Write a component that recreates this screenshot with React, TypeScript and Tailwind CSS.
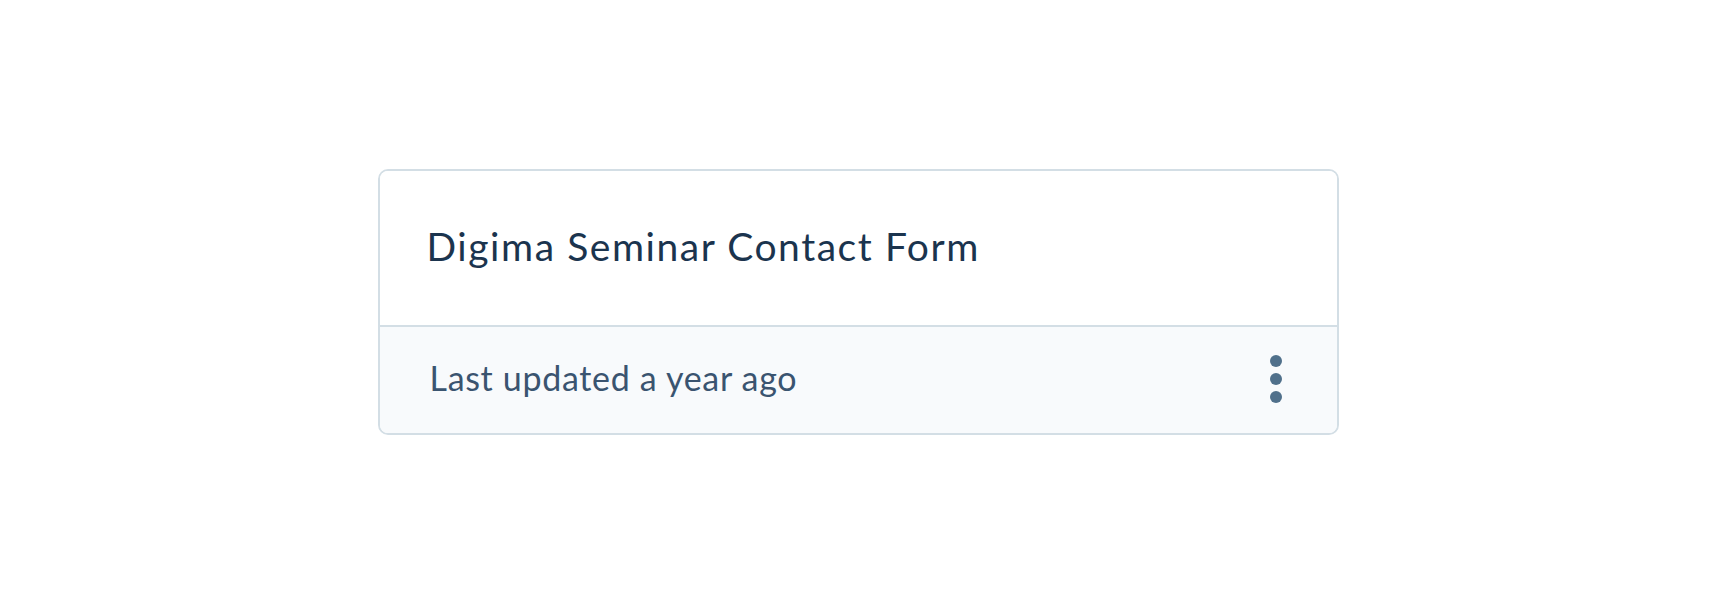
export default function App() {
  return (
    <div className="w-full h-[603px] flex items-center justify-center bg-white" style={{ fontFamily: "Lato, 'Noto Sans', sans-serif" }}>
      <div className="w-[961px] border-2 border-[#d3dee5] rounded-[10px] overflow-hidden">
        <div className="h-[154px] flex items-center pl-[47px] pr-[40px] pb-[3px] bg-white">
          <h2 className="text-[39px] leading-none tracking-[0.04em] text-[#1b344e] font-normal">Digima Seminar Contact Form</h2>
        </div>
        <div className="h-[108px] flex items-center justify-between pl-[50px] pr-[55px] pb-[3px] bg-[#f8fafc] border-t-2 border-[#d3dee5]">
          <span className="text-[34px] leading-none tracking-[0.02em] text-[#3a5470]">Last updated a year ago</span>
          <button className="flex flex-col gap-[6px] items-center pt-[2px]">
            <span className="w-[12px] h-[12px] rounded-full bg-[#50708b]" />
            <span className="w-[12px] h-[12px] rounded-full bg-[#50708b]" />
            <span className="w-[12px] h-[12px] rounded-full bg-[#50708b]" />
          </button>
        </div>
      </div>
    </div>
  )
}
